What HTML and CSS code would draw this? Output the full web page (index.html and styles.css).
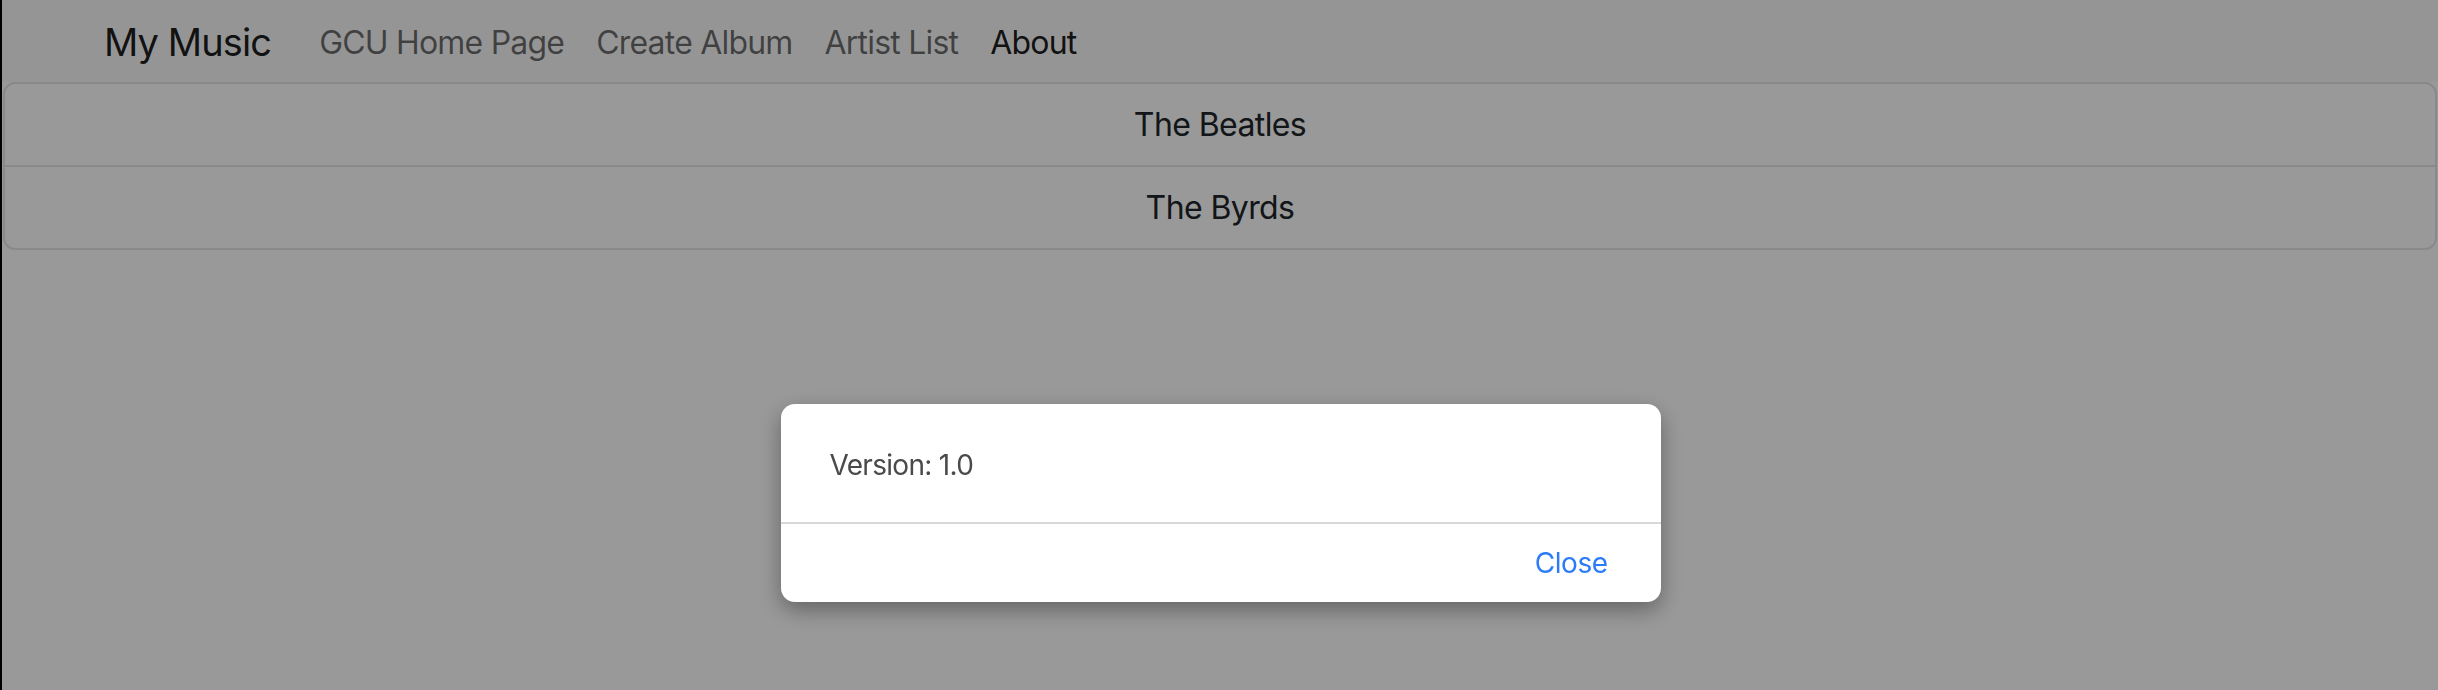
FILE: index.html
```html
<!DOCTYPE html>
<html lang="en">
<head>
<meta charset="utf-8">
<title>My Music</title>
<link rel="stylesheet" href="styles.css">
</head>
<body>
<nav class="navbar">
  <div class="container">
    <a class="brand" href="#">My Music</a>
    <ul class="nav">
      <li><a class="nav-link" href="#">GCU Home Page</a></li>
      <li><a class="nav-link" href="#">Create Album</a></li>
      <li><a class="nav-link" href="#">Artist List</a></li>
      <li><a class="nav-link active" href="#">About</a></li>
    </ul>
  </div>
</nav>
<main class="main">
  <ul class="list-group">
    <li class="list-item">The Beatles</li>
    <li class="list-item">The Byrds</li>
  </ul>
</main>
<div class="backdrop"></div>
<div class="modal-wrap">
  <div class="modal">
    <div class="modal-body">Version: 1.0</div>
    <div class="modal-footer"><button class="btn-link" type="button">Close</button></div>
  </div>
</div>
</body>
</html>
```
FILE: styles.css
```css
html, body {
  margin: 0;
  padding: 0;
  height: 100%;
}
body {
  background: #ffffff;
  font-family: Inter, "Liberation Sans", sans-serif;
  color: #212529;
  border-left: 2px solid #000;
  box-sizing: border-box;
}
.navbar {
  background: #f8f9fa;
  height: 82px;
  display: flex;
  align-items: center;
  padding-top: 2px;
  box-sizing: border-box;
}
.container {
  width: 2280px;
  margin: 0 auto;
  padding: 0 24px;
  display: flex;
  align-items: center;
  box-sizing: border-box;
}
.brand {
  font-size: 38px;
  color: rgba(0, 0, 0, 0.9);
  text-decoration: none;
  margin-right: 32px;
  letter-spacing: -0.9px;
}
.nav {
  list-style: none;
  margin: 0;
  padding: 0;
  display: flex;
}
.nav-link {
  display: block;
  padding: 8px 16px;
  font-size: 32px;
  color: rgba(0, 0, 0, 0.57);
  text-decoration: none;
  letter-spacing: -0.8px;
}
.nav-link.active {
  color: rgba(0, 0, 0, 0.9);
}
.main {
  padding: 0 1px 0 1px;
}
.list-group {
  list-style: none;
  margin: 0;
  padding: 0;
  border: 2px solid #e4e4ea;
  border-radius: 12px;
}
.list-item {
  height: 81px;
  display: flex;
  align-items: center;
  justify-content: center;
  font-size: 32px;
  letter-spacing: -0.6px;
  color: #212529;
}
.list-item + .list-item {
  border-top: 2px solid #e4e4ea;
}
.backdrop {
  position: fixed;
  inset: 0;
  background: rgba(0, 0, 0, 0.4);
}
.modal-wrap {
  position: fixed;
  inset: 0;
  display: flex;
  justify-content: center;
  align-items: flex-start;
  padding-top: 404px;
  padding-left: 3px;
}
.modal {
  width: 880px;
  background: #fff;
  border-radius: 14px;
  box-shadow: 0 8px 22px rgba(0, 0, 0, 0.35);
  overflow: hidden;
}
.modal-body {
  height: 118px;
  display: flex;
  align-items: center;
  padding: 4px 49px 0;
  font-size: 28px;
  color: #4a4a4a;
  letter-spacing: -0.7px;
  box-sizing: border-box;
}
.modal-footer {
  border-top: 2px solid #d8d8d8;
  height: 80px;
  display: flex;
  align-items: center;
  justify-content: flex-end;
  padding: 0 53px;
  box-sizing: border-box;
}
.btn-link {
  background: none;
  border: 0;
  padding: 0;
  font-family: Inter, "Liberation Sans", sans-serif;
  font-size: 28px;
  color: #2b7cf6;
  letter-spacing: -0.5px;
  cursor: pointer;
}
```
